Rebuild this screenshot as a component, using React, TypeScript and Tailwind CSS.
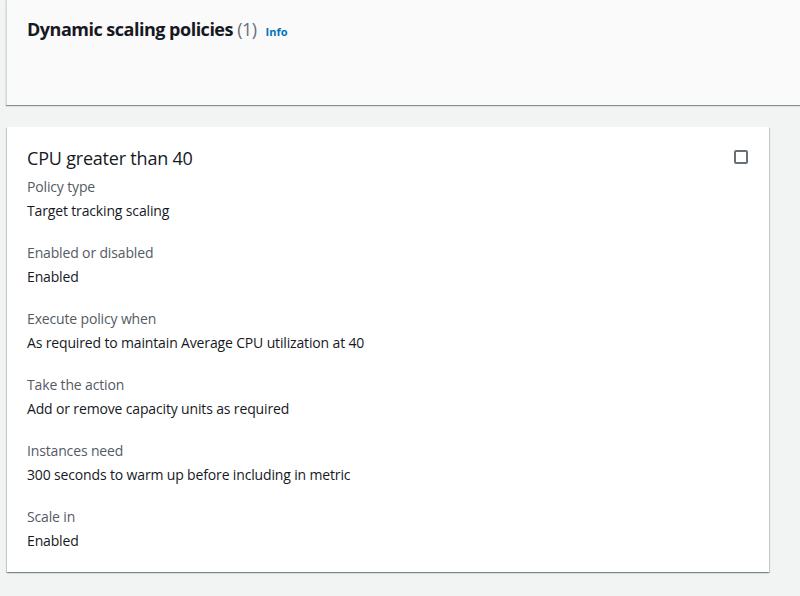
const rows = [
  { label: "Policy type", value: "Target tracking scaling" },
  { label: "Enabled or disabled", value: "Enabled" },
  { label: "Execute policy when", value: "As required to maintain Average CPU utilization at 40" },
  { label: "Take the action", value: "Add or remove capacity units as required" },
  { label: "Instances need", value: "300 seconds to warm up before including in metric" },
  { label: "Scale in", value: "Enabled" },
];

export default function App() {
  return (
    <div
      className="min-h-[596px] w-[800px] overflow-hidden bg-[#f2f3f3] text-[#16191f]"
      style={{ fontFamily: '"Open Sans", "Noto Sans", sans-serif' }}
    >
      <div className="ml-[6px] h-[105px] w-[820px] border-l border-[#d5dbdb] bg-[#fafafa] shadow-[0_1px_1px_0_rgba(0,28,36,0.45)]">
        <div className="flex items-baseline gap-[9px] pl-[20px] pt-[18px]">
          <h2 className="text-[18px] font-bold leading-[22px] tracking-[-0.5px]">
            Dynamic scaling policies{" "}
            <span className="font-normal text-[#687078]">(1)</span>
          </h2>
          <a href="#" className="text-[11px] font-bold text-[#0073bb]">
            Info
          </a>
        </div>
      </div>

      <div className="ml-[7px] mt-[22px] w-[762px] bg-white px-[20px] pb-[21px] pt-[20px] shadow-[0_1px_1px_0_rgba(0,28,36,0.3),1px_1px_1px_0_rgba(0,28,36,0.15),-1px_1px_1px_0_rgba(0,28,36,0.15)]">
        <div className="flex items-start justify-between">
          <h3 className="text-[18px] leading-[22px] tracking-[-0.2px]">CPU greater than 40</h3>
          <span className="mr-[1px] mt-[3px] h-[14px] w-[14px] rounded-[2px] border-2 border-[#687078]" />
        </div>
        <div className="mt-[8px] flex flex-col gap-[22px]">
          {rows.map((r) => (
            <div key={r.label} className="flex flex-col gap-[4px] text-[14px] leading-[20px] tracking-[-0.15px]">
              <span className="text-[#545b64]">{r.label}</span>
              <span>{r.value}</span>
            </div>
          ))}
        </div>
      </div>
    </div>
  );
}
